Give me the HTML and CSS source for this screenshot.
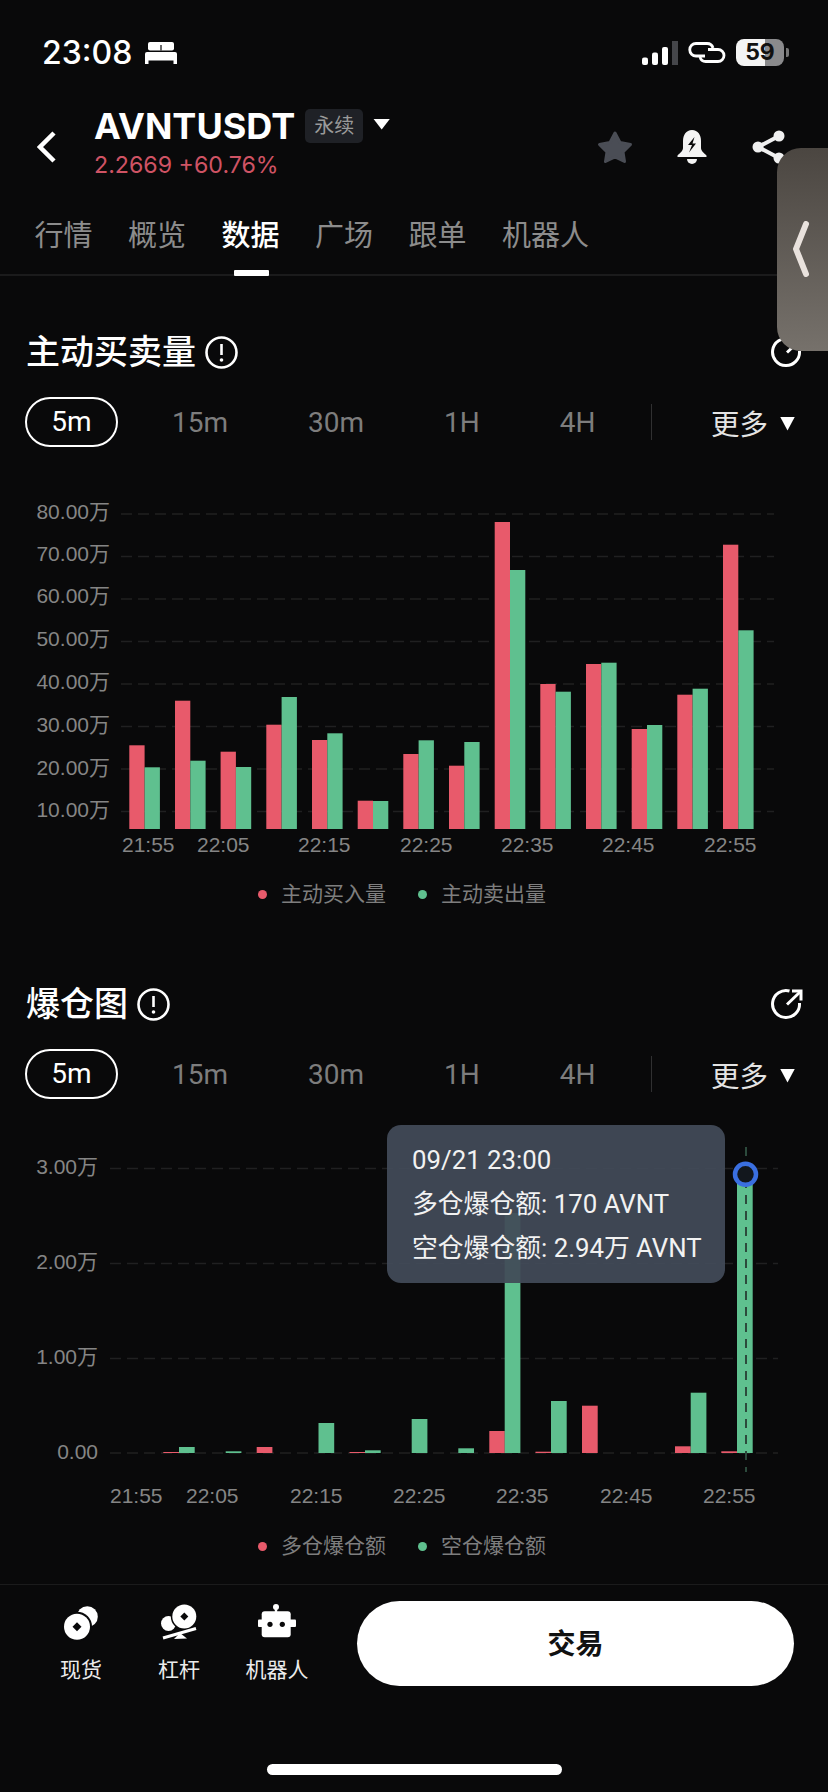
FILE: index.html
```html
<!DOCTYPE html>
<html lang="zh-CN">
<head>
  <meta charset="UTF-8" />
  <meta name="viewport" content="width=device-width, initial-scale=1.0"/>
  <title>AVNTUSDT 数据</title>
  <link rel="stylesheet" href="styles.css">
</head>
<body>
<div class="page">

  <div class="status">
    <span class="time">23:08</span>
    <svg class="bed" viewBox="0 0 32 22">
      <rect x="3" y="0" width="26" height="8.500" rx="2"/>
      <rect class="bed-notch" x="15.400" y="3" width="1.200" height="5.500"/>
      <rect x="0" y="10" width="32" height="8.500" rx="2"/>
      <rect x="0" y="17" width="3.500" height="5"/>
      <rect x="28.500" y="17" width="3.500" height="5"/>
    </svg>
    <svg class="signal" viewBox="0 0 36 24">
      <rect x="0" y="16.500" width="6" height="7.500" rx="2"/>
      <rect x="10" y="11.500" width="6" height="12.500" rx="2"/>
      <rect x="20" y="6" width="6" height="18" rx="2"/>
      <rect class="signal-off" x="30" y="0" width="6" height="24"/>
    </svg>
    <svg class="link" viewBox="0 0 38 21">
      <path d="M17 14H8a6.250 6.250 0 0 1 0-12.500h11a6.250 6.250 0 0 1 6 4.500"/>
      <path d="M20 7.500h10a6 6 0 0 1 0 12H18a6 6 0 0 1-6-4.500"/>
    </svg>
    <span class="battery">59</span>
    <span class="battery-nub"></span>
  </div>

  <div class="topbar">
    <svg class="back" viewBox="0 0 20 32"><path d="M17 2 3 16l14 14"/></svg>
    <div class="symbol">
      <div class="symbol-row">
        <span class="symbol-name">AVNTUSDT</span>
        <span class="badge">永续</span>
        <span class="caret caret-title"></span>
      </div>
      <div class="price">2.2669 +60.76%</div>
    </div>
    <div class="actions">
      <svg class="star" viewBox="0 0 36 34"><polygon points="18,3 23,12.500 33.500,14.500 26,22 27.500,31.500 18,27 8.500,31.500 10,22 2.500,14.500 13,12.500"/></svg>
      <svg class="bell" viewBox="0 0 30 34">
        <path d="M15 0C9 0 6 5 6 11v7c0 3-3 5-5.500 7.500V27h29v-1.500C27 23 24 21 24 18v-7c0-6-3-11-9-11z"/>
        <path d="M10 29h10a5 5 0 0 1-10 0z"/>
        <polygon class="bolt" points="17.500,7 11,15 15,15 12,22.500 19,13.500 15.500,13.500"/>
      </svg>
      <svg class="share" viewBox="0 0 33 34">
        <path d="M27 6 6 17l21 11"/>
        <circle cx="6" cy="17" r="5.500"/>
        <circle cx="27" cy="6" r="5.500"/>
        <circle cx="27" cy="28" r="5.500"/>
      </svg>
    </div>
  </div>

  <div class="tabs">
    <span class="tab">行情</span>
    <span class="tab">概览</span>
    <span class="tab active">数据</span>
    <span class="tab">广场</span>
    <span class="tab">跟单</span>
    <span class="tab">机器人</span>
  </div>

  <div class="side-handle">
    <svg viewBox="0 0 18 56"><path d="M14 3 4 28l10 25"/></svg>
  </div>

  <section class="section first">
    <div class="section-head">
      <h2>主动买卖量</h2>
      <svg class="info" viewBox="0 0 33 33"><circle cx="16.500" cy="16.500" r="15"/><path d="M16.500 8v11"/><circle class="dot" cx="16.500" cy="24" r="1.800"/></svg>
      <svg class="expand" viewBox="0 0 33 33"><path d="M19.500 3A13.500 13.500 0 1 0 29.500 15"/><path d="M17 16.500 30 4"/><path d="M22 3h9v9.500"/></svg>
    </div>
    <div class="ranges">
      <span class="pill">5m</span>
      <span class="range">15m</span>
      <span class="range">30m</span>
      <span class="range">1H</span>
      <span class="range">4H</span>
      <span class="range-sep"></span>
      <span class="more">更多<span class="caret caret-more"></span></span>
    </div>

    <svg class="chart chart-top" viewBox="0 490 828 380">
      <g class="grid">
        <line x1="121" x2="774" y1="514" y2="514"/>
        <line x1="121" x2="774" y1="556.500" y2="556.500"/>
        <line x1="121" x2="774" y1="599" y2="599"/>
        <line x1="121" x2="774" y1="641.500" y2="641.500"/>
        <line x1="121" x2="774" y1="684" y2="684"/>
        <line x1="121" x2="774" y1="726.500" y2="726.500"/>
        <line x1="121" x2="774" y1="769" y2="769"/>
        <line x1="121" x2="774" y1="811.500" y2="811.500"/>
      </g>
      <g class="axis-y">
        <text x="110" y="519">80.00万</text>
        <text x="110" y="561">70.00万</text>
        <text x="110" y="603">60.00万</text>
        <text x="110" y="646">50.00万</text>
        <text x="110" y="689">40.00万</text>
        <text x="110" y="732">30.00万</text>
        <text x="110" y="775">20.00万</text>
        <text x="110" y="817">10.00万</text>
      </g>
      <g class="buy">
        <rect x="129.300" y="745.300" width="15.300" height="83.700"/>
        <rect x="175" y="700.700" width="15.300" height="128.300"/>
        <rect x="220.600" y="751.700" width="15.300" height="77.300"/>
        <rect x="266.300" y="724.700" width="15.300" height="104.300"/>
        <rect x="312" y="740" width="15.300" height="89"/>
        <rect x="357.700" y="800.700" width="15.300" height="28.300"/>
        <rect x="403.300" y="754" width="15.300" height="75"/>
        <rect x="449" y="765.700" width="15.300" height="63.300"/>
        <rect x="494.700" y="522" width="15.300" height="307"/>
        <rect x="540.300" y="684" width="15.300" height="145"/>
        <rect x="586" y="664" width="15.300" height="165"/>
        <rect x="631.700" y="729" width="15.300" height="100"/>
        <rect x="677.300" y="694.700" width="15.300" height="134.300"/>
        <rect x="723" y="544.700" width="15.300" height="284.300"/>
      </g>
      <g class="sell">
        <rect x="144.600" y="767.300" width="15.300" height="61.700"/>
        <rect x="190.300" y="760.700" width="15.300" height="68.300"/>
        <rect x="235.900" y="767" width="15.300" height="62"/>
        <rect x="281.600" y="697" width="15.300" height="132"/>
        <rect x="327.300" y="733.300" width="15.300" height="95.700"/>
        <rect x="373" y="801" width="15.300" height="28"/>
        <rect x="418.600" y="740.300" width="15.300" height="88.700"/>
        <rect x="464.300" y="742" width="15.300" height="87"/>
        <rect x="510" y="570" width="15.300" height="259"/>
        <rect x="555.600" y="691.700" width="15.300" height="137.300"/>
        <rect x="601.300" y="662.700" width="15.300" height="166.300"/>
        <rect x="647" y="725" width="15.300" height="104"/>
        <rect x="692.600" y="688.700" width="15.300" height="140.300"/>
        <rect x="738.300" y="630.300" width="15.300" height="198.700"/>
      </g>
      <g class="axis-x">
        <text x="122" y="852">21:55</text>
        <text x="197" y="852">22:05</text>
        <text x="298" y="852">22:15</text>
        <text x="400" y="852">22:25</text>
        <text x="501" y="852">22:35</text>
        <text x="602" y="852">22:45</text>
        <text x="704" y="852">22:55</text>
      </g>
    </svg>
    <div class="legend legend-top">
      <span class="legend-item"><i class="legend-dot red"></i>主动买入量</span>
      <span class="legend-item"><i class="legend-dot green"></i>主动卖出量</span>
    </div>
  </section>

  <section class="section second">
    <div class="section-head">
      <h2>爆仓图</h2>
      <svg class="info" viewBox="0 0 33 33"><circle cx="16.500" cy="16.500" r="15"/><path d="M16.500 8v11"/><circle class="dot" cx="16.500" cy="24" r="1.800"/></svg>
      <svg class="expand" viewBox="0 0 33 33"><path d="M19.500 3A13.500 13.500 0 1 0 29.500 15"/><path d="M17 16.500 30 4"/><path d="M22 3h9v9.500"/></svg>
    </div>
    <div class="ranges">
      <span class="pill">5m</span>
      <span class="range">15m</span>
      <span class="range">30m</span>
      <span class="range">1H</span>
      <span class="range">4H</span>
      <span class="range-sep"></span>
      <span class="more">更多<span class="caret caret-more"></span></span>
    </div>

    <div class="liq-chart">
      <svg class="chart chart-bottom" viewBox="0 1110 828 420">
        <g class="grid">
          <line x1="110" x2="778" y1="1168.500" y2="1168.500"/>
          <line x1="110" x2="778" y1="1263.500" y2="1263.500"/>
          <line x1="110" x2="778" y1="1358.500" y2="1358.500"/>
          <line x1="110" x2="778" y1="1453" y2="1453"/>
        </g>
        <g class="axis-y">
          <text x="98" y="1174">3.00万</text>
          <text x="98" y="1269">2.00万</text>
          <text x="98" y="1364">1.00万</text>
          <text x="98" y="1459">0.00</text>
        </g>
        <g class="buy">
          <rect x="163.300" y="1452" width="15.700" height="1"/>
          <rect x="256.700" y="1447" width="15.700" height="6"/>
          <rect x="349.500" y="1452" width="15.700" height="1"/>
          <rect x="489.300" y="1431" width="15.500" height="22"/>
          <rect x="535.500" y="1451.700" width="15.500" height="1.300"/>
          <rect x="582" y="1405.700" width="15.700" height="47.300"/>
          <rect x="675" y="1446.300" width="15.700" height="6.700"/>
          <rect x="721.300" y="1451.300" width="15.700" height="1.700"/>
        </g>
        <g class="sell">
          <rect x="179" y="1447" width="15.700" height="6"/>
          <rect x="225.700" y="1451.300" width="15.700" height="1.700"/>
          <rect x="318.500" y="1423" width="15.700" height="30"/>
          <rect x="365" y="1450.300" width="15.700" height="2.700"/>
          <rect x="411.700" y="1419" width="15.700" height="34"/>
          <rect x="458.300" y="1448.300" width="15.700" height="4.700"/>
          <rect x="504.700" y="1213" width="15.700" height="240"/>
          <rect x="551" y="1401" width="15.700" height="52"/>
          <rect x="690.700" y="1392.700" width="15.700" height="60.300"/>
          <rect x="737" y="1173" width="15.700" height="280"/>
        </g>
        <line class="crosshair" x1="746" x2="746" y1="1147" y2="1472"/>
        <circle class="marker" cx="745.500" cy="1174.300" r="10.500"/>
        <g class="axis-x">
          <text x="110" y="1503">21:55</text>
          <text x="186" y="1503">22:05</text>
          <text x="290" y="1503">22:15</text>
          <text x="393" y="1503">22:25</text>
          <text x="496" y="1503">22:35</text>
          <text x="600" y="1503">22:45</text>
          <text x="703" y="1503">22:55</text>
        </g>
      </svg>
      <div class="tooltip">
        <div>09/21 23:00</div>
        <div>多仓爆仓额: 170 AVNT</div>
        <div>空仓爆仓额: 2.94万 AVNT</div>
      </div>
    </div>
    <div class="legend legend-bottom">
      <span class="legend-item"><i class="legend-dot red"></i>多仓爆仓额</span>
      <span class="legend-item"><i class="legend-dot green"></i>空仓爆仓额</span>
    </div>
  </section>

  <div class="footer">
    <div class="nav-item">
      <svg class="nav-icon" viewBox="0 0 38 38">
        <circle class="coin" cx="25.300" cy="12.700" r="10.500"/>
        <circle class="coin-gap" cx="15" cy="22.700" r="15"/>
        <circle class="coin" cx="15" cy="22.700" r="13"/>
        <polygon class="coin-hole" points="15,18.200 19.500,22.700 15,27.200 10.500,22.700"/>
      </svg>
      <span>现货</span>
    </div>
    <div class="nav-item">
      <svg class="nav-icon" viewBox="0 0 38 38">
        <circle class="coin" cx="8.500" cy="19.500" r="7.500"/>
        <circle class="coin-gap" cx="24.300" cy="12.500" r="13.500"/>
        <circle class="coin" cx="24.300" cy="12.500" r="12"/>
        <polygon class="coin-hole" points="24.300,8.500 28.300,12.500 24.300,16.500 20.300,12.500"/>
        <path class="plank" d="M3 34 36 24.500"/>
        <polygon class="coin" points="20,29 27,34.500 14,35"/>
      </svg>
      <span>杠杆</span>
    </div>
    <div class="nav-item">
      <svg class="nav-icon" viewBox="0 0 38 38">
        <circle class="coin" cx="18" cy="3" r="3"/>
        <rect class="coin" x="16.800" y="3" width="2.400" height="6"/>
        <rect class="coin" x="3.700" y="7.300" width="29" height="26" rx="3"/>
        <rect class="coin" x="0" y="15.500" width="38" height="7.500" rx="1"/>
        <circle class="coin-hole" cx="12" cy="20.300" r="2.600"/>
        <circle class="coin-hole" cx="24.300" cy="20.300" r="2.600"/>
      </svg>
      <span>机器人</span>
    </div>
    <button class="trade-btn">交易</button>
  </div>

  <div class="home-bar"></div>

</div>
</body>
</html>
```

FILE: styles.css
```css
* {
  box-sizing: border-box;
  margin: 0;
  padding: 0;
}

body {
  background-color: #09090a;
  color: #fff;
  font-family: Roboto, "Noto Sans CJK SC", sans-serif;
}

.page {
  position: relative;
  width: 828px;
  height: 1792px;
  overflow: hidden;
}

/* status bar */
.status {
  display: flex;
  align-items: center;
  height: 105px;
  padding-left: 42px;
}

.time {
  font-family: Inter, sans-serif;
  font-size: 32px;
  font-weight: 500;
  width: 91px;
}

.bed {
  width: 32px;
  height: 22px;
  margin-left: 12px;
  fill: #fff;
}

.bed-notch {
  fill: #09090a;
}

.signal {
  width: 36px;
  height: 24px;
  margin-left: 465px;
  margin-top: 1px;
  fill: #fff;
}

.signal-off {
  fill: #45464a;
}

.link {
  width: 38px;
  height: 21px;
  margin-left: 10px;
  fill: none;
  stroke: #fff;
  stroke-width: 2.8;
}

.battery {
  width: 48px;
  height: 27px;
  margin-left: 10px;
  border-radius: 8px;
  background: linear-gradient(90deg, #f4f4f4 60%, #8a8a8c 60%);
  color: #111;
  font-family: Inter, sans-serif;
  font-size: 23px;
  font-weight: 700;
  line-height: 27px;
  text-align: center;
}

.battery-nub {
  width: 3px;
  height: 9px;
  margin-left: 2px;
  border-radius: 0 2px 2px 0;
  background-color: #777;
}

/* symbol header */
.topbar {
  display: flex;
  height: 85px;
}

.back {
  width: 20px;
  height: 32px;
  margin: 26px 0 0 37px;
  fill: none;
  stroke: #fff;
  stroke-width: 4.5;
}

.symbol {
  margin-left: 37px;
}

.symbol-row {
  display: flex;
  align-items: center;
  height: 42px;
}

.symbol-name {
  font-family: Inter, sans-serif;
  font-size: 36px;
  font-weight: 700;
  line-height: 42px;
}

.badge {
  margin-left: 10px;
  padding: 0 9px;
  height: 34px;
  border-radius: 5px;
  background-color: #1f2126;
  color: #9a9a9a;
  font-size: 20px;
  line-height: 34px;
}

.caret {
  display: inline-block;
  background-color: #fff;
  clip-path: polygon(0 0, 100% 0, 50% 100%);
}

.caret-title {
  width: 17px;
  height: 11px;
  margin-left: 10px;
  margin-bottom: 4px;
}

.price {
  margin-top: 3px;
  color: #cf5364;
  font-family: Inter, sans-serif;
  font-size: 23.2px;
  line-height: 30px;
}

.actions {
  display: flex;
  margin-left: auto;
  padding: 25px 43px 0 0;
}

.star {
  width: 36px;
  height: 34px;
  margin-right: 44px;
  fill: #4a4d55;
  stroke: #4a4d55;
  stroke-width: 3;
  stroke-linejoin: round;
}

.bell {
  width: 30px;
  height: 34px;
  margin-right: 45px;
  fill: #f4f4f4;
}

.bolt {
  fill: #09090a;
}

.share {
  width: 33px;
  height: 34px;
  fill: #f0f0f0;
  stroke: #f0f0f0;
  stroke-width: 0;
}

.share path {
  fill: none;
  stroke-width: 4;
}

/* tabs */
.tabs {
  display: flex;
  gap: 35.5px;
  height: 86px;
  padding: 26px 0 0 34.5px;
  border-bottom: 2px solid #1b1b1c;
}

.tab {
  position: relative;
  color: #8c8c8c;
  font-size: 29px;
  line-height: 40px;
}

.tab.active {
  color: #fff;
  font-weight: 500;
}

.tab.active::after {
  content: "";
  position: absolute;
  left: 12px;
  right: 11px;
  top: 54px;
  height: 6px;
  border-radius: 1px;
  background-color: #fff;
}

.side-handle {
  position: absolute;
  top: 148px;
  right: 0;
  width: 51px;
  height: 203px;
  border-radius: 24px 0 0 24px;
  background: linear-gradient(180deg, #4b4641, #76716b);
}

.side-handle svg {
  position: absolute;
  top: 73px;
  left: 15px;
  width: 18px;
  height: 56px;
  fill: none;
  stroke: #e9e2dd;
  stroke-width: 6;
  stroke-linecap: round;
  stroke-linejoin: round;
}

/* chart sections */
.section.first {
  padding-top: 56px;
}

.section.second {
  padding-top: 76px;
}

.section-head {
  display: flex;
  align-items: center;
  height: 40px;
  padding: 0 25px 0 26px;
}

h2 {
  font-size: 34px;
  font-weight: 500;
  line-height: 40px;
}

.info {
  width: 33px;
  height: 33px;
  margin-left: 9px;
  fill: none;
  stroke: #fff;
  stroke-width: 2.6;
}

.info .dot {
  fill: #fff;
  stroke: none;
}

.expand {
  width: 33px;
  height: 33px;
  margin-left: auto;
  fill: none;
  stroke: #fff;
  stroke-width: 3;
}

.ranges {
  display: flex;
  align-items: center;
  height: 50px;
  margin-top: 25px;
  padding: 0 33px 0 25px;
}

.pill {
  width: 93px;
  height: 50px;
  margin-right: 14px;
  border: 2.5px solid #fff;
  border-radius: 25px;
  font-size: 28px;
  line-height: 45px;
  text-align: center;
}

.range {
  padding: 0 40px;
  color: #7d7d7d;
  font-size: 28px;
}

.range-sep {
  width: 1.5px;
  height: 36px;
  margin-left: 15px;
  background-color: #303031;
}

.more {
  display: flex;
  align-items: center;
  margin-left: auto;
  color: #e4e4e4;
  font-size: 28.5px;
}

.caret-more {
  width: 15px;
  height: 14px;
  margin-left: 12px;
  margin-top: 3px;
}

.chart {
  display: block;
  width: 828px;
}

.chart-top {
  height: 380px;
  margin-top: 43px;
}

.chart-bottom {
  height: 420px;
}

.liq-chart {
  position: relative;
  margin-top: 11px;
}

.grid line {
  stroke: #202021;
  stroke-width: 1.5;
  stroke-dasharray: 11 6;
}

.axis-y text,
.axis-x text {
  fill: #858585;
  font-family: "Liberation Sans", "Noto Sans CJK SC", sans-serif;
  font-size: 21px;
}

.axis-y text {
  text-anchor: end;
}

.buy rect {
  fill: #e85a6b;
}

.sell rect {
  fill: #5fc08f;
}

.crosshair {
  stroke: #2c4a3c;
  stroke-width: 2;
  stroke-dasharray: 9 7;
}

.marker {
  fill: #12171d;
  stroke: #3a6fe0;
  stroke-width: 4.5;
}

.tooltip {
  position: absolute;
  left: 387px;
  top: 15px;
  width: 338px;
  height: 158px;
  padding: 13px 0 0 25px;
  border-radius: 14px;
  background-color: rgba(66, 74, 88, 0.94);
  color: #f2f2f2;
  font-size: 25.8px;
  line-height: 44px;
}

.legend {
  display: flex;
  gap: 32px;
  height: 28px;
  padding-left: 258px;
  color: #7e7e7e;
  font-size: 21px;
  line-height: 28px;
}

.legend-top {
  margin-top: 10px;
}

.legend-bottom {
  margin-top: 2px;
}

.legend-item {
  display: flex;
  align-items: center;
}

.legend-dot {
  width: 9px;
  height: 9px;
  margin-right: 14px;
  border-radius: 50%;
}

.legend-dot.red {
  background-color: #e85a6b;
}

.legend-dot.green {
  background-color: #5fc08f;
}

/* bottom bar */
.footer {
  display: flex;
  align-items: flex-start;
  height: 102px;
  margin-top: 24px;
  padding: 16px 0 0 32px;
  border-top: 1px solid #1b1b1c;
}

.nav-item {
  display: flex;
  flex-direction: column;
  align-items: center;
  width: 98px;
  margin-top: 3px;
  color: #ececec;
  font-size: 21px;
  line-height: 28px;
}

.nav-icon {
  width: 38px;
  height: 38px;
  margin-bottom: 14px;
}

.coin {
  fill: #fff;
}

.coin-gap {
  fill: #09090a;
}

.coin-hole {
  fill: #09090a;
}

.plank {
  fill: none;
  stroke: #fff;
  stroke-width: 3;
}

.trade-btn {
  width: 437px;
  height: 85px;
  margin-left: 31px;
  padding-bottom: 4px;
  border: none;
  border-radius: 43px;
  background-color: #fff;
  color: #111;
  font-family: Roboto, "Noto Sans CJK SC", sans-serif;
  font-size: 28px;
  font-weight: 700;
}

.home-bar {
  width: 295px;
  height: 11px;
  margin: 78px auto 0;
  border-radius: 6px;
  background-color: #fff;
}
```
